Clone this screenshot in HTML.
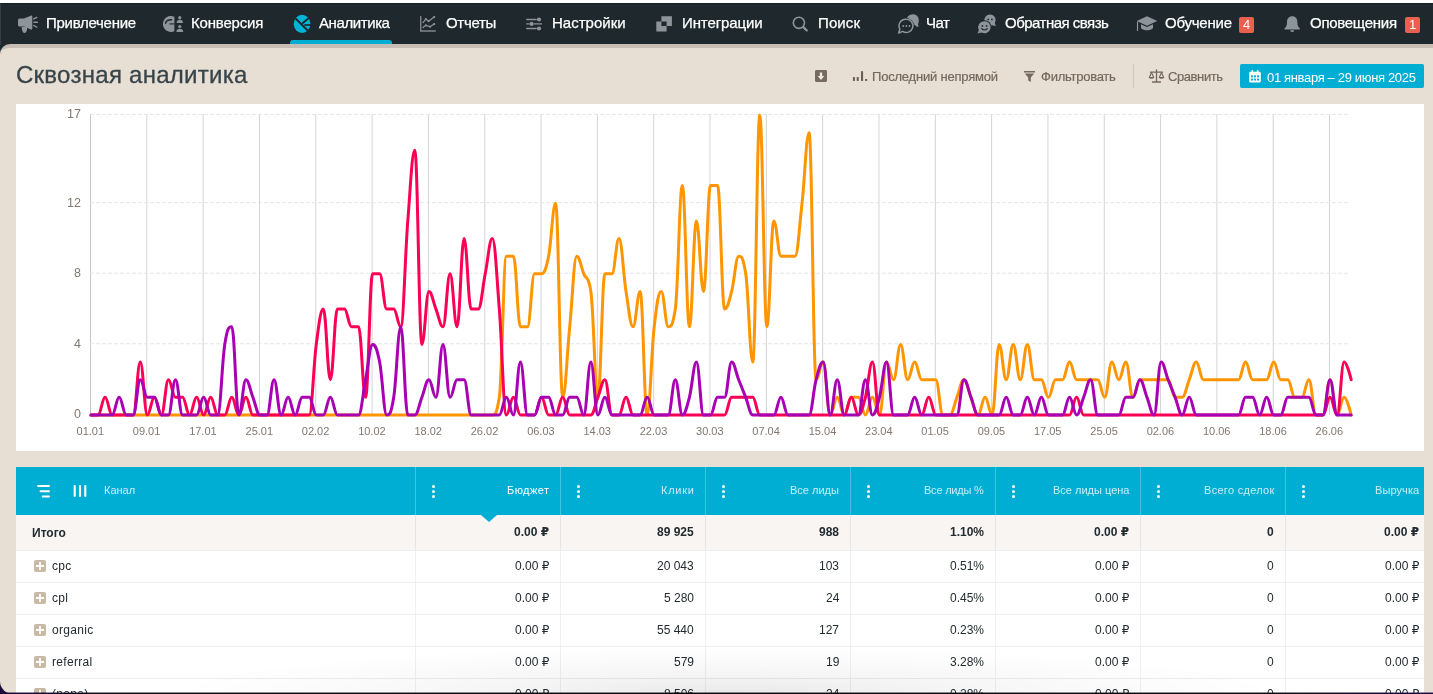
<!DOCTYPE html>
<html lang="ru">
<head>
<meta charset="utf-8">
<title>Сквозная аналитика</title>
<style>
*{box-sizing:border-box}
html,body{margin:0;padding:0}
body{width:1433px;height:694px;overflow:hidden;position:relative;background:linear-gradient(to bottom,#1e282d 0,#1e282d 300px,#1c0a3a 300px,#1c0a3a 100%);font-family:"Liberation Sans","DejaVu Sans",sans-serif;color:#222b30;}
.topstrip{position:absolute;left:0;top:0;width:1433px;height:3px;background:#fff}
.nav{position:absolute;left:0;top:3px;width:1433px;height:42px;background:#1e282d;border-top:1px solid #151d21;border-left:1px solid #363e46}
.nav>*{margin-left:-1px;margin-top:-1px}
.nav .it{position:absolute;top:0;height:39px;line-height:39px;color:#fff;-webkit-text-stroke:.25px #fff;font-size:15px;white-space:nowrap;letter-spacing:0}
.nav .ic{position:absolute;top:0}
.nav .underline{position:absolute;left:290px;top:37px;width:102px;height:4px;background:#00add3;border-radius:3px 3px 0 0}
.badge{position:absolute;top:14px;height:16px;width:15px;border-radius:2px;background:#ec5f4e;color:#fff;font-size:13px;line-height:16px;text-align:center}
.content{position:absolute;left:0;top:44px;width:1433px;height:650px;background:#e7dfd4;border-top:4px solid #c6beb4;border-top-left-radius:10px;border-bottom-left-radius:13px;overflow:hidden}
.wrap{position:absolute;left:0;top:-48px;width:1433px;height:694px}
h1{position:absolute;left:16px;top:59px;margin:0;font-weight:normal;font-size:24px;line-height:32px;color:#37444a;-webkit-text-stroke:.3px #37444a;white-space:nowrap;letter-spacing:0}
.tb{position:absolute;top:64px;height:25px;line-height:25px;font-size:13px;color:#75685c;-webkit-text-stroke:.2px #75685c;white-space:nowrap}
.sep{position:absolute;left:1133px;top:64px;width:1px;height:24px;background:#d3c6b7}
.datebtn{position:absolute;left:1240px;top:64px;width:184px;height:24px;background:#00add3;border-radius:2px;color:#fff;font-size:13px;line-height:25px}
.datebtn span{position:absolute;left:27px;top:1px;white-space:nowrap}
.card{position:absolute;left:16px;top:104px;width:1408px;height:347px;background:#fff}
svg.chart{position:absolute;left:0;top:0;display:block}
.ax{font-family:"Liberation Sans",sans-serif;font-size:11px;fill:#81776e}
.ay{font-size:12.5px}
.thead{position:absolute;left:16px;top:467px;width:1408px;height:48px;background:#00aed3}
.th{position:absolute;top:0;height:46px;line-height:46px;font-size:11px;color:#c9edf6;text-align:right;white-space:nowrap}
.th.act{color:#fff}
.vsep{position:absolute;top:0;width:1px;height:48px;background:#43c1de}
.dots{position:absolute;top:18px;width:3px;height:13px}
.dots i{position:absolute;left:0;width:3px;height:3px;border-radius:50%;background:#fff}
.row{position:absolute;left:16px;width:1408px;background:#fff;border-bottom:1px solid #ebedee}
.row.total{background:#f9f5f2;font-weight:bold}
.row.total .vl{background:#e7e5e3}
.cell{position:absolute;top:0;text-align:right;font-size:12px;white-space:nowrap;color:#222b30}
.row .vl{position:absolute;top:0;width:1px;background:#eef1f2}
.name{position:absolute;font-size:12px;white-space:nowrap;letter-spacing:.3px}
.total .name{letter-spacing:0}
.plus{position:absolute;left:18px;width:12px;height:12px;border-radius:2px;background:#c9b9a4}
.plus:before{content:"";position:absolute;left:2px;top:5px;width:8px;height:2px;background:#fff}
.plus:after{content:"";position:absolute;left:5px;top:2px;width:2px;height:8px;background:#fff}
.shadow{position:absolute;left:170px;top:646px;width:1110px;height:48px;background:radial-gradient(ellipse 50% 100% at 50% 100%,rgba(0,0,0,.085),rgba(0,0,0,.035) 45%,rgba(0,0,0,.01) 80%,rgba(0,0,0,0) 100%);pointer-events:none}
.botline{position:absolute;left:0;top:692px;width:1433px;height:2px;background:linear-gradient(to right,#1c0a3a 0,#150a26 4%,#0a0a0e 9%,#0a0a0e 88%,#14092a 95%,#1f0a44 100%);-webkit-mask:linear-gradient(to bottom,rgba(0,0,0,.45) 0,rgba(0,0,0,.45) 50%,#000 50%);mask:linear-gradient(to bottom,rgba(0,0,0,.45) 0,rgba(0,0,0,.45) 50%,#000 50%)}
.it,h1,.tb,.datebtn span,.th,.cell,.name,.badge,svg.chart{will-change:transform}
</style>
</head>
<body>
<div class="topstrip"></div>
<div class="nav">
<svg class="ic" style="left:0;top:0" width="1433" height="41" viewBox="0 3 1433 41">
<g fill="#8e9598" stroke="none">
<!-- megaphone -->
<path d="M19.600 18.500h4.400L30.800 15.700q1.500-.5 1.500 1v11.800q0 1.500-1.500 1L24 26.400h-4.400q-1.600 0-1.600-1.500v-4.900q0-1.500 1.600-1.500z"/>
<path d="M21.700 27h5.400q.5 3.300-1.100 5.200-1.300 1.300-2.900.3-1.600-1.500-1.400-5.500z"/>
<path d="M33.700 18.900l3.100-1.500M33.900 22.300h3.500M33.700 25.500l3.100 1.600" stroke="#8e9598" stroke-width="1.400" stroke-linecap="round" fill="none"/>
<!-- conversion -->
<path d="M174.400 16.800A8 8 0 1 0 174.400 31.200z"/>
<path d="M165.600 23.200Q166.200 19.900 171.500 19.800" stroke="#1e282d" stroke-width="1.500" fill="none" stroke-linecap="round"/>
<path d="M169.400 23.900h5.200" stroke="#1e282d" stroke-width="1.100" fill="none"/>
<circle cx="179.800" cy="17.700" r="1.600"/>
<path d="M176.600 23.100c0-2.100 1.300-3.300 3.200-3.300s3.200 1.200 3.200 3.300z"/>
<circle cx="179.800" cy="26.500" r="1.600"/>
<path d="M176.400 32c0-2.100 1.400-3.200 3.400-3.200s3.400 1.100 3.400 3.200z"/>
<!-- reports -->
<path d="M420.700 16.500V31h14.600" stroke="#7f8689" stroke-width="1.400" fill="none" stroke-linecap="round"/>
<path d="M423 22.600l2.800-3.500 2.800 2.100 5.600-4.200M423 27.500l2.800-2.200 4.200 1.400 4.200-2.700" stroke="#8e9598" stroke-width="1.300" fill="none" stroke-linecap="round" stroke-linejoin="round"/>
<circle cx="425.800" cy="19.100" r="1"/><circle cx="428.600" cy="21.200" r="1"/><circle cx="434.200" cy="17.100" r="1.100"/><circle cx="425.800" cy="25.300" r="1"/><circle cx="430" cy="26.700" r="1"/><circle cx="434.200" cy="24.100" r="1.100"/>
<!-- settings -->
<path d="M526.700 19.500h9.500M526.700 23.900h2.300M534.200 23.900h7.200M526.700 28.500h9.500" stroke="#8e9598" stroke-width="1.300" stroke-linecap="round" fill="none"/>
<circle cx="539" cy="19.500" r="2.100"/><circle cx="531.600" cy="23.900" r="2.100"/><circle cx="539" cy="28.500" r="2.100"/>
<!-- integrations -->
<path d="M661.400 16.300h10.500v9.700h-5.300v-4.400h-5.200zM656.300 21.600h5.100v4.400h5.200v5.600h-10.300z"/>
<!-- search -->
<circle cx="798.900" cy="22.800" r="5.600" stroke="#8e9598" stroke-width="1.600" fill="none"/>
<path d="M803.300 27.200l3.400 3.200" stroke="#8e9598" stroke-width="2.300" stroke-linecap="round" fill="none"/>
<!-- chat -->
<path d="M907 17.500c2.500-3.200 6.500-4 9.300-2.300 2.800 1.800 3 5.800 1.800 8.800l.3 3.300-2.600-1.200z"/>
<circle cx="906.400" cy="25.900" r="7.700" fill="#1e282d"/>
<path d="M906.400 19.300a6.600 6.600 0 1 1-3.700 12.100L898.600 33l1.300-3.900A6.600 6.600 0 0 1 906.400 19.300z" fill="none" stroke="#8e9598" stroke-width="1.500" stroke-linejoin="round"/>
<circle cx="903.300" cy="26" r=".95"/><circle cx="906.400" cy="26" r=".95"/><circle cx="909.500" cy="26" r=".95"/>
<!-- feedback -->
<path d="M990 14.500a5.700 5.700 0 0 1 4.800 8.800l1.100 2.900-3.200-1A5.700 5.700 0 1 1 990 14.500z"/>
<circle cx="988.200" cy="19.400" r=".9" fill="#1e282d"/><circle cx="991.900" cy="19.400" r=".9" fill="#1e282d"/>
<circle cx="984.500" cy="27.200" r="7" fill="#1e282d"/>
<path d="M984.500 21.200a6 6 0 1 1-2.900 11.200L977.700 33.500l1.100-3.500A6 6 0 0 1 984.500 21.200z"/>
<circle cx="982.400" cy="25.900" r=".9" fill="#1e282d"/><circle cx="986.600" cy="25.900" r=".9" fill="#1e282d"/>
<path d="M981.700 28.700c1.400 1.800 4.200 1.800 5.600 0" stroke="#1e282d" stroke-width="1.100" fill="none" stroke-linecap="round"/>
<!-- learning -->
<path d="M1147 16.300L1157.300 21 1147 25.700 1136.700 21z"/>
<path d="M1141 24.200v4c3.200 2.800 8.800 2.800 12 0v-4L1147 27z"/>
<path d="M1137.500 22v8.500" stroke="#8e9598" stroke-width="1.200" stroke-linecap="round" fill="none"/>
<!-- bell -->
<path d="M1292.200 16.200c-3.300 0-5.200 2.500-5.200 5.700 0 3.500-.8 4.800-2.400 6.300-.4.400-.2 1.200.5 1.200h14.200c.7 0 .9-.8.500-1.200-1.600-1.500-2.400-2.800-2.400-6.300 0-3.200-1.900-5.700-5.200-5.700z"/>
<path d="M1290.300 30.200h3.800a1.900 1.900 0 0 1-3.800 0z"/>
</g>
<!-- analytics (active) -->
<ellipse cx="302.050" cy="23.900" rx="8.400" ry="9.050" fill="#00b4d8"/>
<path d="M295.300 18.300L308.200 31M302.300 23.500l6.800-5.800" stroke="#1e282d" stroke-width="1.900" fill="none"/>
<path d="M304.300 25h6.900" stroke="#1e282d" stroke-width="1.700" fill="none"/>
</svg>
<div class="it" style="left:46px;letter-spacing:-0.28px">Привлечение</div>
<div class="it" style="left:191px;letter-spacing:-0.18px">Конверсия</div>
<div class="it" style="left:319px;letter-spacing:-0.41px">Аналитика</div>
<div class="it" style="left:446px;letter-spacing:-0.30px">Отчеты</div>
<div class="it" style="left:552px;letter-spacing:0.01px">Настройки</div>
<div class="it" style="left:682px;letter-spacing:-0.10px">Интеграции</div>
<div class="it" style="left:818px;letter-spacing:0.10px">Поиск</div>
<div class="it" style="left:926px;letter-spacing:-0.50px">Чат</div>
<div class="it" style="left:1005px;letter-spacing:-0.51px">Обратная связь</div>
<div class="it" style="left:1165px;letter-spacing:-0.23px">Обучение</div>
<div class="it" style="left:1310px;letter-spacing:-0.28px">Оповещения</div>
<div class="underline"></div>
<div class="badge" style="left:1239px">4</div>
<div class="badge" style="left:1405px">1</div>
</div>
<div class="content"><div class="wrap">
<h1 style="letter-spacing:0.27px">Сквозная аналитика</h1>
<svg style="position:absolute;left:815px;top:70px" width="12" height="12" viewBox="0 0 13 13"><rect width="13" height="13" rx="1.500" fill="#76695d"/><path d="M5.200 2.800h2.600v3.800h2.300L6.500 10.800 2.900 6.600h2.300z" fill="#efe8df"/></svg>
<svg style="position:absolute;left:852px;top:70px" width="16" height="12" viewBox="0 0 16 12"><rect x=".9" y="7.100" width="2.050" height="3.800" fill="#6b5f53"/><rect x="4.700" y="7.100" width="2.050" height="3.800" fill="#6b5f53"/><rect x="9" y="1.200" width="2.100" height="9.700" fill="#6b5f53"/><rect x="13.100" y="9" width="2.100" height="1.900" fill="#6b5f53"/></svg>
<div class="tb" style="left:872px;letter-spacing:-0.20px">Последний непрямой</div>
<svg style="position:absolute;left:1023px;top:70px" width="13" height="13" viewBox="0 0 13 13"><path d="M1 1h11v1.600H1zM1.800 3.600h9.400L7.800 7.500V12L5.200 10.500V7.500z" fill="#75685c"/></svg>
<div class="tb" style="left:1041px;letter-spacing:-0.25px">Фильтровать</div>
<div class="sep"></div>
<svg style="position:absolute;left:1148px;top:69px" width="17" height="14" viewBox="0 0 17 14"><path d="M8.500 1v11.500M4.500 13h8M2.500 3.200h12" stroke="#75685c" stroke-width="1.300" fill="none" stroke-linecap="round"/><path d="M3.500 3.500L1.300 8.500h4.400zM13.500 3.500l-2.200 5h4.400z" stroke="#75685c" stroke-width="1.100" fill="none" stroke-linejoin="round"/><path d="M1 8.500c.5 1.800 4.500 1.800 5 0zM11 8.500c.5 1.800 4.500 1.800 5 0z" fill="#75685c"/></svg>
<div class="tb" style="left:1168px;letter-spacing:-0.41px">Сравнить</div>
<div class="datebtn"><svg style="position:absolute;left:9px;top:6px" width="12" height="12.500" viewBox="0 0 13 14"><rect x="0" y="2" width="13" height="12" rx="1.500" fill="#fff"/><rect x="2.500" y="0" width="2" height="4" rx="1" fill="#fff"/><rect x="8.500" y="0" width="2" height="4" rx="1" fill="#fff"/><g fill="#00add3"><rect x="2" y="6" width="2.200" height="2.200"/><rect x="5.400" y="6" width="2.200" height="2.200"/><rect x="8.800" y="6" width="2.200" height="2.200"/><rect x="2" y="9.600" width="2.200" height="2.200"/><rect x="5.400" y="9.600" width="2.200" height="2.200"/><rect x="8.800" y="9.600" width="2.200" height="2.200"/></g></svg><span style="letter-spacing:-0.34px">01 января – 29 июня 2025</span></div>
<div class="card">
<svg class="chart" width="1408" height="347" viewBox="16 104 1408 347">
<line x1="90.50" y1="114" x2="90.50" y2="415" stroke="#c6c6c6" stroke-width="1"/>
<line x1="146.82" y1="114" x2="146.82" y2="415" stroke="#d4d4d4" stroke-width="1"/>
<line x1="203.14" y1="114" x2="203.14" y2="415" stroke="#d4d4d4" stroke-width="1"/>
<line x1="259.46" y1="114" x2="259.46" y2="415" stroke="#d4d4d4" stroke-width="1"/>
<line x1="315.78" y1="114" x2="315.78" y2="415" stroke="#d4d4d4" stroke-width="1"/>
<line x1="372.10" y1="114" x2="372.10" y2="415" stroke="#d4d4d4" stroke-width="1"/>
<line x1="428.42" y1="114" x2="428.42" y2="415" stroke="#d4d4d4" stroke-width="1"/>
<line x1="484.74" y1="114" x2="484.74" y2="415" stroke="#d4d4d4" stroke-width="1"/>
<line x1="541.06" y1="114" x2="541.06" y2="415" stroke="#d4d4d4" stroke-width="1"/>
<line x1="597.38" y1="114" x2="597.38" y2="415" stroke="#d4d4d4" stroke-width="1"/>
<line x1="653.70" y1="114" x2="653.70" y2="415" stroke="#d4d4d4" stroke-width="1"/>
<line x1="710.02" y1="114" x2="710.02" y2="415" stroke="#d4d4d4" stroke-width="1"/>
<line x1="766.34" y1="114" x2="766.34" y2="415" stroke="#d4d4d4" stroke-width="1"/>
<line x1="822.66" y1="114" x2="822.66" y2="415" stroke="#d4d4d4" stroke-width="1"/>
<line x1="878.98" y1="114" x2="878.98" y2="415" stroke="#d4d4d4" stroke-width="1"/>
<line x1="935.30" y1="114" x2="935.30" y2="415" stroke="#d4d4d4" stroke-width="1"/>
<line x1="991.62" y1="114" x2="991.62" y2="415" stroke="#d4d4d4" stroke-width="1"/>
<line x1="1047.94" y1="114" x2="1047.94" y2="415" stroke="#d4d4d4" stroke-width="1"/>
<line x1="1104.26" y1="114" x2="1104.26" y2="415" stroke="#d4d4d4" stroke-width="1"/>
<line x1="1160.58" y1="114" x2="1160.58" y2="415" stroke="#d4d4d4" stroke-width="1"/>
<line x1="1216.90" y1="114" x2="1216.90" y2="415" stroke="#d4d4d4" stroke-width="1"/>
<line x1="1273.22" y1="114" x2="1273.22" y2="415" stroke="#d4d4d4" stroke-width="1"/>
<line x1="1329.54" y1="114" x2="1329.54" y2="415" stroke="#d4d4d4" stroke-width="1"/>
<line x1="90" y1="343.81" x2="1349" y2="343.81" stroke="#e6e6e6" stroke-width="1" stroke-dasharray="4 2"/>
<line x1="90" y1="273.22" x2="1349" y2="273.22" stroke="#e6e6e6" stroke-width="1" stroke-dasharray="4 2"/>
<line x1="90" y1="202.64" x2="1349" y2="202.64" stroke="#e6e6e6" stroke-width="1" stroke-dasharray="4 2"/>
<line x1="90" y1="114.40" x2="1349" y2="114.40" stroke="#e6e6e6" stroke-width="1" stroke-dasharray="4 2"/>
<text x="81" y="418.4" text-anchor="end" class="ax ay">0</text>
<text x="81" y="347.8" text-anchor="end" class="ax ay">4</text>
<text x="81" y="277.2" text-anchor="end" class="ax ay">8</text>
<text x="81" y="206.6" text-anchor="end" class="ax ay">12</text>
<text x="81" y="118.4" text-anchor="end" class="ax ay">17</text>
<text x="90.3" y="434.5" text-anchor="middle" class="ax">01.01</text>
<text x="146.6" y="434.5" text-anchor="middle" class="ax">09.01</text>
<text x="202.9" y="434.5" text-anchor="middle" class="ax">17.01</text>
<text x="259.3" y="434.5" text-anchor="middle" class="ax">25.01</text>
<text x="315.6" y="434.5" text-anchor="middle" class="ax">02.02</text>
<text x="371.9" y="434.5" text-anchor="middle" class="ax">10.02</text>
<text x="428.2" y="434.5" text-anchor="middle" class="ax">18.02</text>
<text x="484.5" y="434.5" text-anchor="middle" class="ax">26.02</text>
<text x="540.9" y="434.5" text-anchor="middle" class="ax">06.03</text>
<text x="597.2" y="434.5" text-anchor="middle" class="ax">14.03</text>
<text x="653.5" y="434.5" text-anchor="middle" class="ax">22.03</text>
<text x="709.8" y="434.5" text-anchor="middle" class="ax">30.03</text>
<text x="766.1" y="434.5" text-anchor="middle" class="ax">07.04</text>
<text x="822.5" y="434.5" text-anchor="middle" class="ax">15.04</text>
<text x="878.8" y="434.5" text-anchor="middle" class="ax">23.04</text>
<text x="935.1" y="434.5" text-anchor="middle" class="ax">01.05</text>
<text x="991.4" y="434.5" text-anchor="middle" class="ax">09.05</text>
<text x="1047.7" y="434.5" text-anchor="middle" class="ax">17.05</text>
<text x="1104.1" y="434.5" text-anchor="middle" class="ax">25.05</text>
<text x="1160.4" y="434.5" text-anchor="middle" class="ax">02.06</text>
<text x="1216.7" y="434.5" text-anchor="middle" class="ax">10.06</text>
<text x="1273.0" y="434.5" text-anchor="middle" class="ax">18.06</text>
<text x="1329.3" y="434.5" text-anchor="middle" class="ax">26.06</text>
<path d="M91.00 415.00C91.00 415.00 95.22 415.00 98.04 415.00C100.86 415.00 102.26 415.00 105.08 415.00C107.90 415.00 109.30 415.00 112.12 415.00C114.94 415.00 116.34 415.00 119.16 415.00C121.98 415.00 123.38 415.00 126.20 415.00C129.02 415.00 130.42 415.00 133.24 415.00C136.06 415.00 137.46 415.00 140.28 415.00C143.10 415.00 144.50 415.00 147.32 415.00C150.14 415.00 151.54 415.00 154.36 415.00C157.18 415.00 158.58 415.00 161.40 415.00C164.22 415.00 165.62 415.00 168.44 415.00C171.26 415.00 172.66 415.00 175.48 415.00C178.30 415.00 179.70 415.00 182.52 415.00C185.34 415.00 186.74 415.00 189.56 415.00C192.38 415.00 193.78 415.00 196.60 415.00C199.42 415.00 200.82 415.00 203.64 415.00C206.46 415.00 207.86 415.00 210.68 415.00C213.50 415.00 214.90 415.00 217.72 415.00C220.54 415.00 221.94 415.00 224.76 415.00C227.58 415.00 228.98 415.00 231.80 415.00C234.62 415.00 236.02 415.00 238.84 415.00C241.66 415.00 243.06 415.00 245.88 415.00C248.70 415.00 250.10 415.00 252.92 415.00C255.74 415.00 257.14 415.00 259.96 415.00C262.78 415.00 264.18 415.00 267.00 415.00C269.82 415.00 271.22 415.00 274.04 415.00C276.86 415.00 278.26 415.00 281.08 415.00C283.90 415.00 285.30 415.00 288.12 415.00C290.94 415.00 292.34 415.00 295.16 415.00C297.98 415.00 299.38 415.00 302.20 415.00C305.02 415.00 306.42 415.00 309.24 415.00C312.06 415.00 313.46 415.00 316.28 415.00C319.10 415.00 320.50 415.00 323.32 415.00C326.14 415.00 327.54 415.00 330.36 415.00C333.18 415.00 334.58 415.00 337.40 415.00C340.22 415.00 341.62 415.00 344.44 415.00C347.26 415.00 348.66 415.00 351.48 415.00C354.30 415.00 355.70 415.00 358.52 415.00C361.34 415.00 362.74 415.00 365.56 415.00C368.38 415.00 369.78 415.00 372.60 415.00C375.42 415.00 376.82 415.00 379.64 415.00C382.46 415.00 383.86 415.00 386.68 415.00C389.50 415.00 390.90 415.00 393.72 415.00C396.54 415.00 397.94 415.00 400.76 415.00C403.58 415.00 404.98 415.00 407.80 415.00C410.62 415.00 412.02 415.00 414.84 415.00C417.66 415.00 419.06 415.00 421.88 415.00C424.70 415.00 426.10 415.00 428.92 415.00C431.74 415.00 433.14 415.00 435.96 415.00C438.78 415.00 440.18 415.00 443.00 415.00C445.82 415.00 447.22 415.00 450.04 415.00C452.86 415.00 454.26 415.00 457.08 415.00C459.90 415.00 461.30 415.00 464.12 415.00C466.94 415.00 468.34 415.00 471.16 415.00C473.98 415.00 475.38 415.00 478.20 415.00C481.02 415.00 482.42 415.00 485.24 415.00C488.06 415.00 489.46 415.00 492.28 415.00C495.10 415.00 496.50 415.00 499.32 397.35C502.14 379.71 503.54 256.18 506.36 256.18C509.18 256.18 510.58 256.18 513.40 256.18C516.22 256.18 517.62 326.76 520.44 326.76C523.26 326.76 524.66 326.76 527.48 326.76C530.30 326.76 531.70 273.82 534.52 273.82C537.34 273.82 538.74 273.82 541.56 273.82C544.38 273.82 545.78 270.29 548.60 256.18C551.42 242.06 552.82 203.24 555.64 203.24C558.46 203.24 559.86 397.35 562.68 397.35C565.50 397.35 566.90 355.00 569.72 326.76C572.54 298.53 573.94 256.18 576.76 256.18C579.58 256.18 580.98 266.76 583.80 273.82C586.62 280.88 588.02 273.82 590.84 291.47C593.66 309.12 595.06 397.35 597.88 397.35C600.70 397.35 602.10 273.82 604.92 273.82C607.74 273.82 609.14 273.82 611.96 273.82C614.78 273.82 616.18 238.53 619.00 238.53C621.82 238.53 623.22 273.82 626.04 291.47C628.86 309.12 630.26 326.76 633.08 326.76C635.90 326.76 637.30 291.47 640.12 291.47C642.94 291.47 644.34 415.00 647.16 415.00C649.98 415.00 651.38 351.47 654.20 326.76C657.02 302.06 658.42 291.47 661.24 291.47C664.06 291.47 665.46 326.76 668.28 326.76C671.10 326.76 672.50 326.76 675.32 309.12C678.14 291.47 679.54 185.59 682.36 185.59C685.18 185.59 686.58 326.76 689.40 326.76C692.22 326.76 693.62 220.88 696.44 220.88C699.26 220.88 700.66 291.47 703.48 291.47C706.30 291.47 707.70 185.59 710.52 185.59C713.34 185.59 714.74 185.59 717.56 185.59C720.38 185.59 721.78 309.12 724.60 309.12C727.42 309.12 728.82 302.06 731.64 291.47C734.46 280.88 735.86 256.18 738.68 256.18C741.50 256.18 742.90 256.18 745.72 273.82C748.54 291.47 749.94 362.06 752.76 362.06C755.58 362.06 756.98 115.00 759.80 115.00C762.62 115.00 764.02 326.76 766.84 326.76C769.66 326.76 771.06 220.88 773.88 220.88C776.70 220.88 778.10 256.18 780.92 256.18C783.74 256.18 785.14 256.18 787.96 256.18C790.78 256.18 792.18 256.18 795.00 256.18C797.82 256.18 799.22 227.94 802.04 203.24C804.86 178.53 806.26 132.65 809.08 132.65C811.90 132.65 813.30 379.71 816.12 379.71C818.94 379.71 820.34 362.06 823.16 362.06C825.98 362.06 827.38 415.00 830.20 415.00C833.02 415.00 834.42 397.35 837.24 397.35C840.06 397.35 841.46 415.00 844.28 415.00C847.10 415.00 848.50 397.35 851.32 397.35C854.14 397.35 855.54 397.35 858.36 397.35C861.18 397.35 862.58 415.00 865.40 415.00C868.22 415.00 869.62 397.35 872.44 397.35C875.26 397.35 876.66 415.00 879.48 415.00C882.30 415.00 883.70 362.06 886.52 362.06C889.34 362.06 890.74 379.71 893.56 379.71C896.38 379.71 897.78 344.41 900.60 344.41C903.42 344.41 904.82 379.71 907.64 379.71C910.46 379.71 911.86 362.06 914.68 362.06C917.50 362.06 918.90 379.71 921.72 379.71C924.54 379.71 925.94 379.71 928.76 379.71C931.58 379.71 932.98 379.71 935.80 379.71C938.62 379.71 940.02 415.00 942.84 415.00C945.66 415.00 947.06 415.00 949.88 415.00C952.70 415.00 954.10 404.41 956.92 397.35C959.74 390.29 961.14 379.71 963.96 379.71C966.78 379.71 968.18 390.29 971.00 397.35C973.82 404.41 975.22 415.00 978.04 415.00C980.86 415.00 982.26 397.35 985.08 397.35C987.90 397.35 989.30 415.00 992.12 415.00C994.94 415.00 996.34 344.41 999.16 344.41C1001.98 344.41 1003.38 379.71 1006.20 379.71C1009.02 379.71 1010.42 344.41 1013.24 344.41C1016.06 344.41 1017.46 379.71 1020.28 379.71C1023.10 379.71 1024.50 344.41 1027.32 344.41C1030.14 344.41 1031.54 379.71 1034.36 379.71C1037.18 379.71 1038.58 379.71 1041.40 379.71C1044.22 379.71 1045.62 397.35 1048.44 397.35C1051.26 397.35 1052.66 379.71 1055.48 379.71C1058.30 379.71 1059.70 379.71 1062.52 379.71C1065.34 379.71 1066.74 362.06 1069.56 362.06C1072.38 362.06 1073.78 379.71 1076.60 379.71C1079.42 379.71 1080.82 379.71 1083.64 379.71C1086.46 379.71 1087.86 379.71 1090.68 379.71C1093.50 379.71 1094.90 379.71 1097.72 379.71C1100.54 379.71 1101.94 397.35 1104.76 397.35C1107.58 397.35 1108.98 362.06 1111.80 362.06C1114.62 362.06 1116.02 379.71 1118.84 379.71C1121.66 379.71 1123.06 362.06 1125.88 362.06C1128.70 362.06 1130.10 397.35 1132.92 397.35C1135.74 397.35 1137.14 379.71 1139.96 379.71C1142.78 379.71 1144.18 379.71 1147.00 379.71C1149.82 379.71 1151.22 379.71 1154.04 379.71C1156.86 379.71 1158.26 379.71 1161.08 379.71C1163.90 379.71 1165.30 379.71 1168.12 379.71C1170.94 379.71 1172.34 397.35 1175.16 397.35C1177.98 397.35 1179.38 397.35 1182.20 397.35C1185.02 397.35 1186.42 386.76 1189.24 379.71C1192.06 372.65 1193.46 362.06 1196.28 362.06C1199.10 362.06 1200.50 379.71 1203.32 379.71C1206.14 379.71 1207.54 379.71 1210.36 379.71C1213.18 379.71 1214.58 379.71 1217.40 379.71C1220.22 379.71 1221.62 379.71 1224.44 379.71C1227.26 379.71 1228.66 379.71 1231.48 379.71C1234.30 379.71 1235.70 379.71 1238.52 379.71C1241.34 379.71 1242.74 362.06 1245.56 362.06C1248.38 362.06 1249.78 379.71 1252.60 379.71C1255.42 379.71 1256.82 379.71 1259.64 379.71C1262.46 379.71 1263.86 379.71 1266.68 379.71C1269.50 379.71 1270.90 362.06 1273.72 362.06C1276.54 362.06 1277.94 379.71 1280.76 379.71C1283.58 379.71 1284.98 379.71 1287.80 379.71C1290.62 379.71 1292.02 397.35 1294.84 397.35C1297.66 397.35 1299.06 397.35 1301.88 397.35C1304.70 397.35 1306.10 379.71 1308.92 379.71C1311.74 379.71 1313.14 415.00 1315.96 415.00C1318.78 415.00 1320.18 415.00 1323.00 415.00C1325.82 415.00 1327.22 379.71 1330.04 379.71C1332.86 379.71 1334.26 415.00 1337.08 415.00C1339.90 415.00 1341.30 397.35 1344.12 397.35C1346.94 397.35 1351.16 415.00 1351.16 415.00" fill="none" stroke="#ff9500" stroke-width="3" stroke-linejoin="round" stroke-linecap="round"/>
<path d="M91.00 415.00C91.00 415.00 95.22 415.00 98.04 415.00C100.86 415.00 102.26 397.35 105.08 397.35C107.90 397.35 109.30 415.00 112.12 415.00C114.94 415.00 116.34 415.00 119.16 415.00C121.98 415.00 123.38 415.00 126.20 415.00C129.02 415.00 130.42 415.00 133.24 415.00C136.06 415.00 137.46 362.06 140.28 362.06C143.10 362.06 144.50 415.00 147.32 415.00C150.14 415.00 151.54 397.35 154.36 397.35C157.18 397.35 158.58 415.00 161.40 415.00C164.22 415.00 165.62 379.71 168.44 379.71C171.26 379.71 172.66 397.35 175.48 397.35C178.30 397.35 179.70 397.35 182.52 397.35C185.34 397.35 186.74 415.00 189.56 415.00C192.38 415.00 193.78 397.35 196.60 397.35C199.42 397.35 200.82 415.00 203.64 415.00C206.46 415.00 207.86 397.35 210.68 397.35C213.50 397.35 214.90 415.00 217.72 415.00C220.54 415.00 221.94 415.00 224.76 415.00C227.58 415.00 228.98 397.35 231.80 397.35C234.62 397.35 236.02 415.00 238.84 415.00C241.66 415.00 243.06 397.35 245.88 397.35C248.70 397.35 250.10 415.00 252.92 415.00C255.74 415.00 257.14 415.00 259.96 415.00C262.78 415.00 264.18 415.00 267.00 415.00C269.82 415.00 271.22 415.00 274.04 415.00C276.86 415.00 278.26 415.00 281.08 415.00C283.90 415.00 285.30 415.00 288.12 415.00C290.94 415.00 292.34 415.00 295.16 415.00C297.98 415.00 299.38 415.00 302.20 415.00C305.02 415.00 306.42 415.00 309.24 415.00C312.06 415.00 313.46 365.59 316.28 344.41C319.10 323.24 320.50 309.12 323.32 309.12C326.14 309.12 327.54 379.71 330.36 379.71C333.18 379.71 334.58 309.12 337.40 309.12C340.22 309.12 341.62 309.12 344.44 309.12C347.26 309.12 348.66 326.76 351.48 326.76C354.30 326.76 355.70 326.76 358.52 326.76C361.34 326.76 362.74 397.35 365.56 397.35C368.38 397.35 369.78 273.82 372.60 273.82C375.42 273.82 376.82 273.82 379.64 273.82C382.46 273.82 383.86 309.12 386.68 309.12C389.50 309.12 390.90 309.12 393.72 309.12C396.54 309.12 397.94 326.76 400.76 326.76C403.58 326.76 404.98 256.18 407.80 220.88C410.62 185.59 412.02 150.29 414.84 150.29C417.66 150.29 419.06 344.41 421.88 344.41C424.70 344.41 426.10 291.47 428.92 291.47C431.74 291.47 433.14 302.06 435.96 309.12C438.78 316.18 440.18 326.76 443.00 326.76C445.82 326.76 447.22 273.82 450.04 273.82C452.86 273.82 454.26 326.76 457.08 326.76C459.90 326.76 461.30 238.53 464.12 238.53C466.94 238.53 468.34 309.12 471.16 309.12C473.98 309.12 475.38 309.12 478.20 309.12C481.02 309.12 482.42 287.94 485.24 273.82C488.06 259.71 489.46 238.53 492.28 238.53C495.10 238.53 496.50 273.82 499.32 309.12C502.14 344.41 503.54 415.00 506.36 415.00C509.18 415.00 510.58 397.35 513.40 397.35C516.22 397.35 517.62 415.00 520.44 415.00C523.26 415.00 524.66 415.00 527.48 415.00C530.30 415.00 531.70 415.00 534.52 415.00C537.34 415.00 538.74 397.35 541.56 397.35C544.38 397.35 545.78 415.00 548.60 415.00C551.42 415.00 552.82 415.00 555.64 415.00C558.46 415.00 559.86 397.35 562.68 397.35C565.50 397.35 566.90 415.00 569.72 415.00C572.54 415.00 573.94 415.00 576.76 415.00C579.58 415.00 580.98 415.00 583.80 415.00C586.62 415.00 588.02 415.00 590.84 415.00C593.66 415.00 595.06 404.41 597.88 397.35C600.70 390.29 602.10 379.71 604.92 379.71C607.74 379.71 609.14 415.00 611.96 415.00C614.78 415.00 616.18 415.00 619.00 415.00C621.82 415.00 623.22 397.35 626.04 397.35C628.86 397.35 630.26 415.00 633.08 415.00C635.90 415.00 637.30 415.00 640.12 415.00C642.94 415.00 644.34 415.00 647.16 415.00C649.98 415.00 651.38 415.00 654.20 415.00C657.02 415.00 658.42 415.00 661.24 415.00C664.06 415.00 665.46 415.00 668.28 415.00C671.10 415.00 672.50 415.00 675.32 415.00C678.14 415.00 679.54 415.00 682.36 415.00C685.18 415.00 686.58 415.00 689.40 415.00C692.22 415.00 693.62 415.00 696.44 415.00C699.26 415.00 700.66 415.00 703.48 415.00C706.30 415.00 707.70 415.00 710.52 415.00C713.34 415.00 714.74 415.00 717.56 415.00C720.38 415.00 721.78 415.00 724.60 415.00C727.42 415.00 728.82 397.35 731.64 397.35C734.46 397.35 735.86 397.35 738.68 397.35C741.50 397.35 742.90 397.35 745.72 397.35C748.54 397.35 749.94 397.35 752.76 397.35C755.58 397.35 756.98 415.00 759.80 415.00C762.62 415.00 764.02 415.00 766.84 415.00C769.66 415.00 771.06 415.00 773.88 415.00C776.70 415.00 778.10 415.00 780.92 415.00C783.74 415.00 785.14 415.00 787.96 415.00C790.78 415.00 792.18 415.00 795.00 415.00C797.82 415.00 799.22 415.00 802.04 415.00C804.86 415.00 806.26 415.00 809.08 415.00C811.90 415.00 813.30 415.00 816.12 415.00C818.94 415.00 820.34 415.00 823.16 415.00C825.98 415.00 827.38 415.00 830.20 415.00C833.02 415.00 834.42 415.00 837.24 415.00C840.06 415.00 841.46 415.00 844.28 415.00C847.10 415.00 848.50 397.35 851.32 397.35C854.14 397.35 855.54 415.00 858.36 415.00C861.18 415.00 862.58 407.94 865.40 397.35C868.22 386.76 869.62 362.06 872.44 362.06C875.26 362.06 876.66 415.00 879.48 415.00C882.30 415.00 883.70 415.00 886.52 415.00C889.34 415.00 890.74 415.00 893.56 415.00C896.38 415.00 897.78 415.00 900.60 415.00C903.42 415.00 904.82 415.00 907.64 415.00C910.46 415.00 911.86 415.00 914.68 415.00C917.50 415.00 918.90 415.00 921.72 415.00C924.54 415.00 925.94 397.35 928.76 397.35C931.58 397.35 932.98 415.00 935.80 415.00C938.62 415.00 940.02 415.00 942.84 415.00C945.66 415.00 947.06 415.00 949.88 415.00C952.70 415.00 954.10 415.00 956.92 415.00C959.74 415.00 961.14 415.00 963.96 415.00C966.78 415.00 968.18 415.00 971.00 415.00C973.82 415.00 975.22 415.00 978.04 415.00C980.86 415.00 982.26 415.00 985.08 415.00C987.90 415.00 989.30 415.00 992.12 415.00C994.94 415.00 996.34 415.00 999.16 415.00C1001.98 415.00 1003.38 415.00 1006.20 415.00C1009.02 415.00 1010.42 415.00 1013.24 415.00C1016.06 415.00 1017.46 415.00 1020.28 415.00C1023.10 415.00 1024.50 415.00 1027.32 415.00C1030.14 415.00 1031.54 415.00 1034.36 415.00C1037.18 415.00 1038.58 415.00 1041.40 415.00C1044.22 415.00 1045.62 415.00 1048.44 415.00C1051.26 415.00 1052.66 415.00 1055.48 415.00C1058.30 415.00 1059.70 415.00 1062.52 415.00C1065.34 415.00 1066.74 415.00 1069.56 415.00C1072.38 415.00 1073.78 397.35 1076.60 397.35C1079.42 397.35 1080.82 415.00 1083.64 415.00C1086.46 415.00 1087.86 415.00 1090.68 415.00C1093.50 415.00 1094.90 415.00 1097.72 415.00C1100.54 415.00 1101.94 415.00 1104.76 415.00C1107.58 415.00 1108.98 415.00 1111.80 415.00C1114.62 415.00 1116.02 415.00 1118.84 415.00C1121.66 415.00 1123.06 415.00 1125.88 415.00C1128.70 415.00 1130.10 415.00 1132.92 415.00C1135.74 415.00 1137.14 415.00 1139.96 415.00C1142.78 415.00 1144.18 415.00 1147.00 415.00C1149.82 415.00 1151.22 415.00 1154.04 415.00C1156.86 415.00 1158.26 415.00 1161.08 415.00C1163.90 415.00 1165.30 415.00 1168.12 415.00C1170.94 415.00 1172.34 415.00 1175.16 415.00C1177.98 415.00 1179.38 415.00 1182.20 415.00C1185.02 415.00 1186.42 415.00 1189.24 415.00C1192.06 415.00 1193.46 415.00 1196.28 415.00C1199.10 415.00 1200.50 415.00 1203.32 415.00C1206.14 415.00 1207.54 415.00 1210.36 415.00C1213.18 415.00 1214.58 415.00 1217.40 415.00C1220.22 415.00 1221.62 415.00 1224.44 415.00C1227.26 415.00 1228.66 415.00 1231.48 415.00C1234.30 415.00 1235.70 415.00 1238.52 415.00C1241.34 415.00 1242.74 415.00 1245.56 415.00C1248.38 415.00 1249.78 415.00 1252.60 415.00C1255.42 415.00 1256.82 415.00 1259.64 415.00C1262.46 415.00 1263.86 415.00 1266.68 415.00C1269.50 415.00 1270.90 415.00 1273.72 415.00C1276.54 415.00 1277.94 415.00 1280.76 415.00C1283.58 415.00 1284.98 415.00 1287.80 415.00C1290.62 415.00 1292.02 415.00 1294.84 415.00C1297.66 415.00 1299.06 415.00 1301.88 415.00C1304.70 415.00 1306.10 415.00 1308.92 415.00C1311.74 415.00 1313.14 415.00 1315.96 415.00C1318.78 415.00 1320.18 415.00 1323.00 415.00C1325.82 415.00 1327.22 397.35 1330.04 397.35C1332.86 397.35 1334.26 415.00 1337.08 415.00C1339.90 415.00 1341.30 362.06 1344.12 362.06C1346.94 362.06 1351.16 379.71 1351.16 379.71" fill="none" stroke="#fc0055" stroke-width="3" stroke-linejoin="round" stroke-linecap="round"/>
<path d="M91.00 415.00C91.00 415.00 95.22 415.00 98.04 415.00C100.86 415.00 102.26 415.00 105.08 415.00C107.90 415.00 109.30 415.00 112.12 415.00C114.94 415.00 116.34 397.35 119.16 397.35C121.98 397.35 123.38 415.00 126.20 415.00C129.02 415.00 130.42 415.00 133.24 415.00C136.06 415.00 137.46 379.71 140.28 379.71C143.10 379.71 144.50 397.35 147.32 397.35C150.14 397.35 151.54 397.35 154.36 397.35C157.18 397.35 158.58 415.00 161.40 415.00C164.22 415.00 165.62 415.00 168.44 415.00C171.26 415.00 172.66 379.71 175.48 379.71C178.30 379.71 179.70 415.00 182.52 415.00C185.34 415.00 186.74 415.00 189.56 415.00C192.38 415.00 193.78 415.00 196.60 415.00C199.42 415.00 200.82 397.35 203.64 397.35C206.46 397.35 207.86 415.00 210.68 415.00C213.50 415.00 214.90 415.00 217.72 415.00C220.54 415.00 221.94 362.06 224.76 344.41C227.58 326.76 228.98 326.76 231.80 326.76C234.62 326.76 236.02 415.00 238.84 415.00C241.66 415.00 243.06 379.71 245.88 379.71C248.70 379.71 250.10 390.29 252.92 397.35C255.74 404.41 257.14 415.00 259.96 415.00C262.78 415.00 264.18 415.00 267.00 415.00C269.82 415.00 271.22 379.71 274.04 379.71C276.86 379.71 278.26 415.00 281.08 415.00C283.90 415.00 285.30 397.35 288.12 397.35C290.94 397.35 292.34 415.00 295.16 415.00C297.98 415.00 299.38 397.35 302.20 397.35C305.02 397.35 306.42 397.35 309.24 397.35C312.06 397.35 313.46 415.00 316.28 415.00C319.10 415.00 320.50 415.00 323.32 415.00C326.14 415.00 327.54 397.35 330.36 397.35C333.18 397.35 334.58 415.00 337.40 415.00C340.22 415.00 341.62 415.00 344.44 415.00C347.26 415.00 348.66 415.00 351.48 415.00C354.30 415.00 355.70 415.00 358.52 415.00C361.34 415.00 362.74 393.82 365.56 379.71C368.38 365.59 369.78 344.41 372.60 344.41C375.42 344.41 376.82 347.94 379.64 362.06C382.46 376.18 383.86 415.00 386.68 415.00C389.50 415.00 390.90 415.00 393.72 397.35C396.54 379.71 397.94 326.76 400.76 326.76C403.58 326.76 404.98 415.00 407.80 415.00C410.62 415.00 412.02 415.00 414.84 415.00C417.66 415.00 419.06 404.41 421.88 397.35C424.70 390.29 426.10 379.71 428.92 379.71C431.74 379.71 433.14 397.35 435.96 397.35C438.78 397.35 440.18 344.41 443.00 344.41C445.82 344.41 447.22 397.35 450.04 397.35C452.86 397.35 454.26 379.71 457.08 379.71C459.90 379.71 461.30 379.71 464.12 379.71C466.94 379.71 468.34 415.00 471.16 415.00C473.98 415.00 475.38 415.00 478.20 415.00C481.02 415.00 482.42 415.00 485.24 415.00C488.06 415.00 489.46 415.00 492.28 415.00C495.10 415.00 496.50 415.00 499.32 415.00C502.14 415.00 503.54 397.35 506.36 397.35C509.18 397.35 510.58 415.00 513.40 415.00C516.22 415.00 517.62 362.06 520.44 362.06C523.26 362.06 524.66 415.00 527.48 415.00C530.30 415.00 531.70 415.00 534.52 415.00C537.34 415.00 538.74 397.35 541.56 397.35C544.38 397.35 545.78 397.35 548.60 397.35C551.42 397.35 552.82 415.00 555.64 415.00C558.46 415.00 559.86 415.00 562.68 415.00C565.50 415.00 566.90 397.35 569.72 397.35C572.54 397.35 573.94 397.35 576.76 397.35C579.58 397.35 580.98 415.00 583.80 415.00C586.62 415.00 588.02 362.06 590.84 362.06C593.66 362.06 595.06 415.00 597.88 415.00C600.70 415.00 602.10 397.35 604.92 397.35C607.74 397.35 609.14 415.00 611.96 415.00C614.78 415.00 616.18 415.00 619.00 415.00C621.82 415.00 623.22 415.00 626.04 415.00C628.86 415.00 630.26 415.00 633.08 415.00C635.90 415.00 637.30 415.00 640.12 415.00C642.94 415.00 644.34 397.35 647.16 397.35C649.98 397.35 651.38 415.00 654.20 415.00C657.02 415.00 658.42 415.00 661.24 415.00C664.06 415.00 665.46 415.00 668.28 415.00C671.10 415.00 672.50 379.71 675.32 379.71C678.14 379.71 679.54 415.00 682.36 415.00C685.18 415.00 686.58 407.94 689.40 397.35C692.22 386.76 693.62 362.06 696.44 362.06C699.26 362.06 700.66 415.00 703.48 415.00C706.30 415.00 707.70 415.00 710.52 415.00C713.34 415.00 714.74 397.35 717.56 397.35C720.38 397.35 721.78 397.35 724.60 397.35C727.42 397.35 728.82 362.06 731.64 362.06C734.46 362.06 735.86 372.65 738.68 379.71C741.50 386.76 742.90 390.29 745.72 397.35C748.54 404.41 749.94 415.00 752.76 415.00C755.58 415.00 756.98 415.00 759.80 415.00C762.62 415.00 764.02 415.00 766.84 415.00C769.66 415.00 771.06 415.00 773.88 415.00C776.70 415.00 778.10 397.35 780.92 397.35C783.74 397.35 785.14 415.00 787.96 415.00C790.78 415.00 792.18 415.00 795.00 415.00C797.82 415.00 799.22 415.00 802.04 415.00C804.86 415.00 806.26 415.00 809.08 415.00C811.90 415.00 813.30 390.29 816.12 379.71C818.94 369.12 820.34 362.06 823.16 362.06C825.98 362.06 827.38 415.00 830.20 415.00C833.02 415.00 834.42 379.71 837.24 379.71C840.06 379.71 841.46 415.00 844.28 415.00C847.10 415.00 848.50 415.00 851.32 415.00C854.14 415.00 855.54 415.00 858.36 415.00C861.18 415.00 862.58 379.71 865.40 379.71C868.22 379.71 869.62 415.00 872.44 415.00C875.26 415.00 876.66 407.94 879.48 397.35C882.30 386.76 883.70 362.06 886.52 362.06C889.34 362.06 890.74 415.00 893.56 415.00C896.38 415.00 897.78 415.00 900.60 415.00C903.42 415.00 904.82 415.00 907.64 415.00C910.46 415.00 911.86 397.35 914.68 397.35C917.50 397.35 918.90 415.00 921.72 415.00C924.54 415.00 925.94 415.00 928.76 415.00C931.58 415.00 932.98 415.00 935.80 415.00C938.62 415.00 940.02 415.00 942.84 415.00C945.66 415.00 947.06 415.00 949.88 415.00C952.70 415.00 954.10 415.00 956.92 415.00C959.74 415.00 961.14 379.71 963.96 379.71C966.78 379.71 968.18 390.29 971.00 397.35C973.82 404.41 975.22 415.00 978.04 415.00C980.86 415.00 982.26 415.00 985.08 415.00C987.90 415.00 989.30 415.00 992.12 415.00C994.94 415.00 996.34 415.00 999.16 415.00C1001.98 415.00 1003.38 397.35 1006.20 397.35C1009.02 397.35 1010.42 415.00 1013.24 415.00C1016.06 415.00 1017.46 415.00 1020.28 415.00C1023.10 415.00 1024.50 397.35 1027.32 397.35C1030.14 397.35 1031.54 415.00 1034.36 415.00C1037.18 415.00 1038.58 397.35 1041.40 397.35C1044.22 397.35 1045.62 415.00 1048.44 415.00C1051.26 415.00 1052.66 415.00 1055.48 415.00C1058.30 415.00 1059.70 415.00 1062.52 415.00C1065.34 415.00 1066.74 397.35 1069.56 397.35C1072.38 397.35 1073.78 415.00 1076.60 415.00C1079.42 415.00 1080.82 404.41 1083.64 397.35C1086.46 390.29 1087.86 379.71 1090.68 379.71C1093.50 379.71 1094.90 415.00 1097.72 415.00C1100.54 415.00 1101.94 415.00 1104.76 415.00C1107.58 415.00 1108.98 415.00 1111.80 415.00C1114.62 415.00 1116.02 415.00 1118.84 415.00C1121.66 415.00 1123.06 397.35 1125.88 397.35C1128.70 397.35 1130.10 397.35 1132.92 397.35C1135.74 397.35 1137.14 379.71 1139.96 379.71C1142.78 379.71 1144.18 390.29 1147.00 397.35C1149.82 404.41 1151.22 415.00 1154.04 415.00C1156.86 415.00 1158.26 362.06 1161.08 362.06C1163.90 362.06 1165.30 372.65 1168.12 379.71C1170.94 386.76 1172.34 390.29 1175.16 397.35C1177.98 404.41 1179.38 415.00 1182.20 415.00C1185.02 415.00 1186.42 397.35 1189.24 397.35C1192.06 397.35 1193.46 415.00 1196.28 415.00C1199.10 415.00 1200.50 415.00 1203.32 415.00C1206.14 415.00 1207.54 415.00 1210.36 415.00C1213.18 415.00 1214.58 415.00 1217.40 415.00C1220.22 415.00 1221.62 415.00 1224.44 415.00C1227.26 415.00 1228.66 415.00 1231.48 415.00C1234.30 415.00 1235.70 415.00 1238.52 415.00C1241.34 415.00 1242.74 397.35 1245.56 397.35C1248.38 397.35 1249.78 397.35 1252.60 397.35C1255.42 397.35 1256.82 415.00 1259.64 415.00C1262.46 415.00 1263.86 397.35 1266.68 397.35C1269.50 397.35 1270.90 415.00 1273.72 415.00C1276.54 415.00 1277.94 415.00 1280.76 415.00C1283.58 415.00 1284.98 397.35 1287.80 397.35C1290.62 397.35 1292.02 397.35 1294.84 397.35C1297.66 397.35 1299.06 397.35 1301.88 397.35C1304.70 397.35 1306.10 397.35 1308.92 397.35C1311.74 397.35 1313.14 415.00 1315.96 415.00C1318.78 415.00 1320.18 415.00 1323.00 415.00C1325.82 415.00 1327.22 379.71 1330.04 379.71C1332.86 379.71 1334.26 415.00 1337.08 415.00C1339.90 415.00 1341.30 415.00 1344.12 415.00C1346.94 415.00 1351.16 415.00 1351.16 415.00" fill="none" stroke="#a800b3" stroke-width="3" stroke-linejoin="round" stroke-linecap="round"/>
</svg>
</div>
<div class="thead">
<svg style="position:absolute;left:21px;top:17px" width="13" height="14" viewBox="0 0 13 14"><path d="M1 2h11M3.500 7.300h8.500M5.700 12.500h6.300" stroke="#fff" stroke-width="1.900" stroke-linecap="round"/></svg>
<svg style="position:absolute;left:57px;top:17px" width="14" height="14" viewBox="0 0 14 14"><path d="M1.700 2v10M7 2v10M12.300 2v10" stroke="#fff" stroke-width="2.100" stroke-linecap="round"/></svg>
<div class="th" style="left:88px;text-align:left">Канал</div>
<div class="vsep" style="left:399px"></div>
<div class="dots" style="left:416px"><i style="top:0"></i><i style="top:5px"></i><i style="top:10px"></i></div>
<div class="th act" style="right:874.56px;letter-spacing:0.44px">Бюджет</div>
<div class="vsep" style="left:544px"></div>
<div class="dots" style="left:561px"><i style="top:0"></i><i style="top:5px"></i><i style="top:10px"></i></div>
<div class="th" style="right:729.26px;letter-spacing:0.74px">Клики</div>
<div class="vsep" style="left:689px"></div>
<div class="dots" style="left:706px"><i style="top:0"></i><i style="top:5px"></i><i style="top:10px"></i></div>
<div class="th" style="right:585.00px;letter-spacing:-0.00px">Все лиды</div>
<div class="vsep" style="left:834px"></div>
<div class="dots" style="left:851px"><i style="top:0"></i><i style="top:5px"></i><i style="top:10px"></i></div>
<div class="th" style="right:440.22px;letter-spacing:-0.22px">Все лиды %</div>
<div class="vsep" style="left:979px"></div>
<div class="dots" style="left:996px"><i style="top:0"></i><i style="top:5px"></i><i style="top:10px"></i></div>
<div class="th" style="right:295.00px;letter-spacing:0.00px">Все лиды цена</div>
<div class="vsep" style="left:1124px"></div>
<div class="dots" style="left:1141px"><i style="top:0"></i><i style="top:5px"></i><i style="top:10px"></i></div>
<div class="th" style="right:149.71px;letter-spacing:0.29px">Всего сделок</div>
<div class="vsep" style="left:1269px"></div>
<div class="dots" style="left:1286px"><i style="top:0"></i><i style="top:5px"></i><i style="top:10px"></i></div>
<div class="th" style="right:4.91px;letter-spacing:0.09px">Выручка</div>
</div>
<div class="row total" style="top:515px;height:36px;line-height:35px">
<div class="name" style="left:16px;top:1px">Итого</div>
<div class="vl" style="left:399px;height:35px"></div>
<div class="cell" style="right:875px">0.00 ₽</div>
<div class="vl" style="left:544px;height:35px"></div>
<div class="cell" style="right:730px">89 925</div>
<div class="vl" style="left:689px;height:35px"></div>
<div class="cell" style="right:585px">988</div>
<div class="vl" style="left:834px;height:35px"></div>
<div class="cell" style="right:440px">1.10%</div>
<div class="vl" style="left:979px;height:35px"></div>
<div class="cell" style="right:295px">0.00 ₽</div>
<div class="vl" style="left:1124px;height:35px"></div>
<div class="cell" style="right:150px">0</div>
<div class="vl" style="left:1269px;height:35px"></div>
<div class="cell" style="right:5px">0.00 ₽</div>
</div>
<div class="row" style="top:551px;height:32px;line-height:30px">
<div class="plus" style="top:9px"></div>
<div class="name" style="left:36px;top:0">cpc</div>
<div class="vl" style="left:399px;height:31px"></div>
<div class="cell" style="right:875px">0.00 ₽</div>
<div class="vl" style="left:544px;height:31px"></div>
<div class="cell" style="right:730px">20 043</div>
<div class="vl" style="left:689px;height:31px"></div>
<div class="cell" style="right:585px">103</div>
<div class="vl" style="left:834px;height:31px"></div>
<div class="cell" style="right:440px">0.51%</div>
<div class="vl" style="left:979px;height:31px"></div>
<div class="cell" style="right:295px">0.00 ₽</div>
<div class="vl" style="left:1124px;height:31px"></div>
<div class="cell" style="right:150px">0</div>
<div class="vl" style="left:1269px;height:31px"></div>
<div class="cell" style="right:5px">0.00 ₽</div>
</div>
<div class="row" style="top:583px;height:32px;line-height:30px">
<div class="plus" style="top:9px"></div>
<div class="name" style="left:36px;top:0">cpl</div>
<div class="vl" style="left:399px;height:31px"></div>
<div class="cell" style="right:875px">0.00 ₽</div>
<div class="vl" style="left:544px;height:31px"></div>
<div class="cell" style="right:730px">5 280</div>
<div class="vl" style="left:689px;height:31px"></div>
<div class="cell" style="right:585px">24</div>
<div class="vl" style="left:834px;height:31px"></div>
<div class="cell" style="right:440px">0.45%</div>
<div class="vl" style="left:979px;height:31px"></div>
<div class="cell" style="right:295px">0.00 ₽</div>
<div class="vl" style="left:1124px;height:31px"></div>
<div class="cell" style="right:150px">0</div>
<div class="vl" style="left:1269px;height:31px"></div>
<div class="cell" style="right:5px">0.00 ₽</div>
</div>
<div class="row" style="top:615px;height:32px;line-height:30px">
<div class="plus" style="top:9px"></div>
<div class="name" style="left:36px;top:0">organic</div>
<div class="vl" style="left:399px;height:31px"></div>
<div class="cell" style="right:875px">0.00 ₽</div>
<div class="vl" style="left:544px;height:31px"></div>
<div class="cell" style="right:730px">55 440</div>
<div class="vl" style="left:689px;height:31px"></div>
<div class="cell" style="right:585px">127</div>
<div class="vl" style="left:834px;height:31px"></div>
<div class="cell" style="right:440px">0.23%</div>
<div class="vl" style="left:979px;height:31px"></div>
<div class="cell" style="right:295px">0.00 ₽</div>
<div class="vl" style="left:1124px;height:31px"></div>
<div class="cell" style="right:150px">0</div>
<div class="vl" style="left:1269px;height:31px"></div>
<div class="cell" style="right:5px">0.00 ₽</div>
</div>
<div class="row" style="top:647px;height:32px;line-height:30px">
<div class="plus" style="top:9px"></div>
<div class="name" style="left:36px;top:0">referral</div>
<div class="vl" style="left:399px;height:31px"></div>
<div class="cell" style="right:875px">0.00 ₽</div>
<div class="vl" style="left:544px;height:31px"></div>
<div class="cell" style="right:730px">579</div>
<div class="vl" style="left:689px;height:31px"></div>
<div class="cell" style="right:585px">19</div>
<div class="vl" style="left:834px;height:31px"></div>
<div class="cell" style="right:440px">3.28%</div>
<div class="vl" style="left:979px;height:31px"></div>
<div class="cell" style="right:295px">0.00 ₽</div>
<div class="vl" style="left:1124px;height:31px"></div>
<div class="cell" style="right:150px">0</div>
<div class="vl" style="left:1269px;height:31px"></div>
<div class="cell" style="right:5px">0.00 ₽</div>
</div>
<div class="row" style="top:679px;height:32px;line-height:30px">
<div class="plus" style="top:9px"></div>
<div class="name" style="left:36px;top:0">(none)</div>
<div class="vl" style="left:399px;height:31px"></div>
<div class="cell" style="right:875px">0.00 ₽</div>
<div class="vl" style="left:544px;height:31px"></div>
<div class="cell" style="right:730px">8 506</div>
<div class="vl" style="left:689px;height:31px"></div>
<div class="cell" style="right:585px">24</div>
<div class="vl" style="left:834px;height:31px"></div>
<div class="cell" style="right:440px">0.28%</div>
<div class="vl" style="left:979px;height:31px"></div>
<div class="cell" style="right:295px">0.00 ₽</div>
<div class="vl" style="left:1124px;height:31px"></div>
<div class="cell" style="right:150px">0</div>
<div class="vl" style="left:1269px;height:31px"></div>
<div class="cell" style="right:5px">0.00 ₽</div>
</div>
<svg style="position:absolute;left:481px;top:515px" width="16" height="7" viewBox="0 0 16 7"><path d="M0 0h16L8 7z" fill="#00aed3"/></svg>
<div class="shadow"></div>
</div></div>
<div class="botline"></div>
</body>
</html>
